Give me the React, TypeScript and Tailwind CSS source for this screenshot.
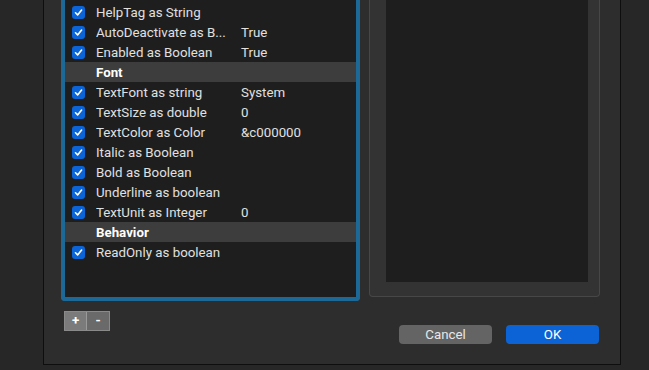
import React from "react";

type Row =
  | { kind: "item"; name: string; value?: string }
  | { kind: "group"; label: string };

const rows: Row[] = [
  { kind: "item", name: "HelpTag as String" },
  { kind: "item", name: "AutoDeactivate as B...", value: "True" },
  { kind: "item", name: "Enabled as Boolean", value: "True" },
  { kind: "group", label: "Font" },
  { kind: "item", name: "TextFont as string", value: "System" },
  { kind: "item", name: "TextSize as double", value: "0" },
  { kind: "item", name: "TextColor as Color", value: "&c000000" },
  { kind: "item", name: "Italic as Boolean" },
  { kind: "item", name: "Bold as Boolean" },
  { kind: "item", name: "Underline as boolean" },
  { kind: "item", name: "TextUnit as Integer", value: "0" },
  { kind: "group", label: "Behavior" },
  { kind: "item", name: "ReadOnly as boolean" },
];

function Check() {
  return (
    <span className="flex items-center justify-center w-[13px] h-[13px] rounded-[3px] bg-[#0b64d8]">
      <svg width="9" height="9" viewBox="0 0 9 9" fill="none">
        <path d="M1.5 4.8 L3.6 6.9 L7.6 2" stroke="white" strokeWidth="1.6" strokeLinecap="round" strokeLinejoin="round" />
      </svg>
    </span>
  );
}

export default function App() {
  return (
    <div
      className="w-[649px] h-[370px] flex bg-[#272727] overflow-hidden text-[13.3px] text-[#e0e0e0]"
      style={{ fontFamily: "Roboto, 'Liberation Sans', sans-serif" }}
    >
      <div className="w-[43px] shrink-0" />
      {/* dialog window */}
      <div className="w-[578px] h-[365px] shrink-0 flex flex-col bg-[#2d2d2d] border-x border-b border-[#0e0e0e] pl-[17px] pr-[20px]">
        <div className="flex items-start">
          {/* property list */}
          <div className="w-[299px] h-[301px] flex flex-col pt-[2px] bg-[#1e1e1e] border-x-4 border-b-4 border-t-0 border-[#1c6897] rounded-b-[4px]">
            {rows.map((r, i) =>
              r.kind === "group" ? (
                <div key={i} className="h-[20px] flex items-center bg-[#3d3d3d] pl-[31px] font-bold text-white">
                  <span className="mt-[2px]">{r.label}</span>
                </div>
              ) : (
                <div key={i} className="h-[20px] flex items-center pl-[7px]">
                  <Check />
                  <span className="mt-[2px] ml-[11px] w-[145px] whitespace-nowrap overflow-hidden">{r.name}</span>
                  {r.value && <span className="mt-[2px]">{r.value}</span>}
                </div>
              )
            )}
          </div>
          {/* preview box */}
          <div className="ml-[9px] w-[231px] h-[297px] flex flex-col bg-[#333333] border-x border-b border-[#474747] rounded-b-[4px] pl-[16px] pr-[11px] pb-[14px]">
            <div className="flex-1 bg-[#1e1e1e]" />
          </div>
        </div>
        <div className="flex items-start">
          <div className="mt-[10px] ml-[3px] flex h-[20px] border border-[#8a8a8a]">
            <div className="w-[22px] flex items-center justify-center bg-[#7b7b7b] text-white font-bold leading-none border-r border-[#9a9a9a]">
              +
            </div>
            <div className="w-[22px] flex items-center justify-center bg-[#6a6a6a] text-white font-bold leading-none">
              -
            </div>
          </div>
          <div className="ml-auto mt-[24px] flex gap-[14px] mr-[1px]">
            <div className="w-[93px] h-[19px] rounded-[4px] bg-[#646464] flex items-center justify-center text-[#e8e8e8]">
              Cancel
            </div>
            <div className="w-[93px] h-[19px] rounded-[4px] bg-[#0b63d6] flex items-center justify-center text-white">
              OK
            </div>
          </div>
        </div>
      </div>
    </div>
  );
}
